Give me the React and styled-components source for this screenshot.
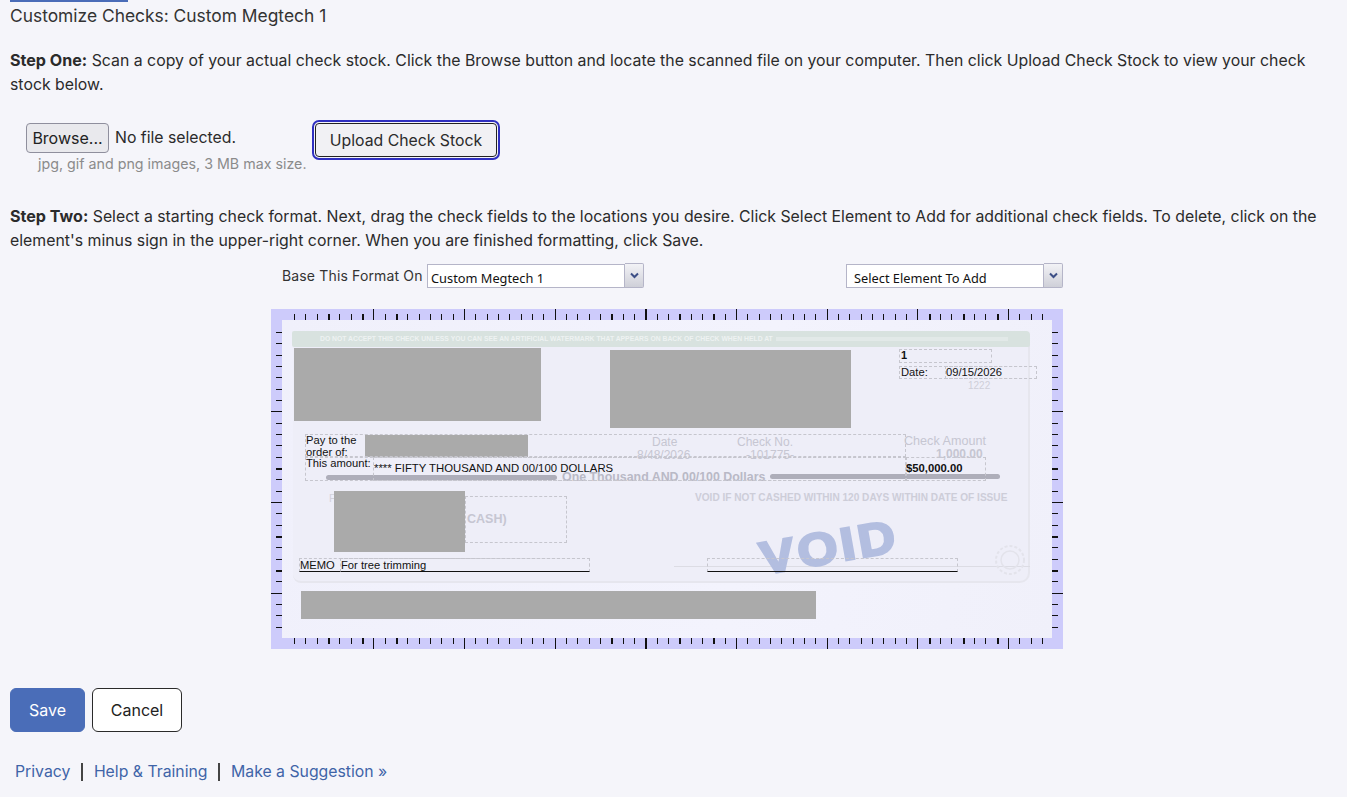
import styled, { createGlobalStyle } from 'styled-components';

const GlobalStyle = createGlobalStyle`
  html, body {
    margin: 0;
    padding: 0;
    background-color: #f5f5fa;
    font-family: Inter, "Liberation Sans", sans-serif;
    color: #2b2b2b;
  }
`

const Page = styled.div`
  padding: 0 10px;
  height: 797px;
  box-sizing: border-box;
  overflow: hidden;
  font-size: 15.85px;
  line-height: 24px;
`

const TabMark = styled.div`
  width: 118px;
  height: 2px;
  background-color: #4a6cb8;
`

const Title = styled.h1`
  margin: 2px 0 0;
  font-size: 17.4px;
  font-weight: 400;
  line-height: 24px;
  color: #333;
`

const Step = styled.p`
  margin: ${props => props.$top}px 0 0;
  & b { font-size: 16.1px; font-weight: 700; line-height: 1; }
`

const UploadRow = styled.div`
  display: flex;
  align-items: flex-start;
  margin: 26px 0 0 16px;
`

const FileColumn = styled.div`
  display: flex;
  flex-direction: column;
  width: 289px;
`

const FilePicker = styled.div`
  display: flex;
  align-items: center;
  gap: 6px;
  font-size: 15.8px;
`

const BrowseButton = styled.button`
  width: 83px;
  height: 30px;
  padding: 0;
  border: 1px solid #8f8f9d;
  border-radius: 4px;
  background-color: #e9e9ed;
  color: #222;
  font: 400 16px Inter, "Liberation Sans", sans-serif;
`

const FileHint = styled.div`
  margin: 0 0 0 12px;
  font-size: 14.25px;
  line-height: 22px;
  color: #8b8b8b;
`

const UploadButton = styled.button`
  width: 182px;
  height: 34px;
  padding: 0;
  border: 1px solid #222;
  border-radius: 4px;
  background-color: #f1f1f4;
  color: #2b2b2b;
  font: 400 15.8px Inter, "Liberation Sans", sans-serif;
  outline: 2.5px solid #3030c0;
  outline-offset: 1.5px;
`

const Toolbar = styled.div`
  display: flex;
  align-items: flex-start;
  margin: 10px 0 0 272px;
  height: 26px;
`

const FormatLabel = styled.span`
  width: 145px;
  font-size: 14px;
  line-height: 26px;
  letter-spacing: 0.15px;
  color: #333;
`

const Dropdown = styled.div`
  display: flex;
  align-items: flex-start;
  margin-left: ${props => props.$left}px;
`

const DropdownField = styled.div`
  width: 198px;
  height: 24px;
  margin-top: 1px;
  padding-left: ${props => props.$pad}px;
  box-sizing: border-box;
  border: 1px solid #b5b5c8;
  background-color: #fff;
  color: #111;
  font: 12.8px/26px "Noto Sans", "Liberation Sans", sans-serif;
`

const DropdownArrow = styled.div`
  width: 19px;
  height: 25px;
  box-sizing: border-box;
  display: flex;
  align-items: center;
  justify-content: center;
  border: 1px solid #b5b5c8;
  border-left: none;
  border-radius: 0 2px 2px 0;
  background: linear-gradient(#f2f2f6, #cfd0d8);
`

const CheckCanvas = styled.div`
  position: relative;
  width: 792px;
  height: 340px;
  margin: 20px 0 0 261px;
  background-color: #cdcbfb;
  font-family: "Liberation Sans", Arial, sans-serif;
  overflow: hidden;
`

const RulerMarks = styled.svg`
  position: absolute;
  left: 0;
  top: 0;
`

const Paper = styled.div`
  position: absolute;
  left: 11px;
  top: 11px;
  width: 770px;
  height: 318px;
  background: linear-gradient(100deg, #f0f0fb, #f3f3fd 60%, #f0f0fa);
`

const CheckStock = styled.div`
  position: absolute;
  left: 22px;
  top: 22px;
  width: 737px;
  height: 252px;
  box-sizing: border-box;
  border: 2px solid #e6e6ee;
  border-top: none;
  border-left: none;
  border-radius: 0 6px 10px 8px;
  background-color: #eeeef8;
`

const Banner = styled.div`
  position: absolute;
  left: 21px;
  top: 22px;
  width: 738px;
  height: 16px;
  border-radius: 2px 4px 2px 2px;
  background-color: #d8e2df;
`

const BannerText = styled.div`
  position: absolute;
  left: 49px;
  top: 26px;
  color: #eef2f2;
  font-size: 6.8px;
  font-weight: 700;
  line-height: 8px;
  white-space: nowrap;
`

const BannerFade = styled.div`
  position: absolute;
  left: 505px;
  top: 28px;
  width: 232px;
  height: 4px;
  background-color: #e2e9e8;
`

const Redacted = styled.div`
  position: absolute;
  left: ${props => props.$x}px;
  top: ${props => props.$y}px;
  width: ${props => props.$w}px;
  height: ${props => props.$h}px;
  background-color: #aaaaaa;
`

const DashedBox = styled.div`
  position: absolute;
  left: ${props => props.$x}px;
  top: ${props => props.$y}px;
  width: ${props => props.$w}px;
  height: ${props => props.$h}px;
  box-sizing: border-box;
  border: 1px dashed #c6c6ce;
  ${props => props.$line && 'border-bottom: 1px solid #111;'}
`

const FieldText = styled.div`
  position: absolute;
  left: ${props => props.$x}px;
  top: ${props => props.$y}px;
  font-size: ${props => props.$size || 11.2}px;
  font-weight: ${props => (props.$bold ? 700 : 400)};
  line-height: 1;
  color: #111;
  white-space: nowrap;
`

const StockText = styled(FieldText)`
  color: ${props => props.$color || '#c6c6d2'};
`

const GreyBar = styled.div`
  position: absolute;
  left: ${props => props.$x}px;
  top: ${props => props.$y}px;
  width: ${props => props.$w}px;
  height: 5px;
  border-radius: 3px;
  background-color: #aeaeba;
`

const SignatureRule = styled.div`
  position: absolute;
  left: 403px;
  top: 257px;
  width: 356px;
  height: 1px;
  background-color: #dcdce4;
`

const VoidStamp = styled.div`
  position: absolute;
  left: 496px;
  top: 215px;
  color: #b3bee0;
  font-size: 46px;
  font-weight: 700;
  line-height: 1;
  letter-spacing: 3px;
  -webkit-text-stroke: 2.5px #b3bee0;
  transform: rotate(-10deg) scaleX(1.12);
`

const Seal = styled.svg`
  position: absolute;
  left: 723px;
  top: 235px;
`

const ButtonRow = styled.div`
  display: flex;
  gap: 7px;
  margin-top: 39px;
`

const ActionButton = styled.button`
  width: ${props => props.$width}px;
  height: 44px;
  padding: 0;
  box-sizing: border-box;
  border: 1px solid ${props => (props.$primary ? '#4a6db8' : '#2a2a2a')};
  border-radius: 6px;
  background-color: ${props => (props.$primary ? '#4a6db8' : '#fff')};
  color: ${props => (props.$primary ? '#fff' : '#222')};
  font: 400 16px Inter, "Liberation Sans", sans-serif;
`

const FooterNav = styled.nav`
  display: flex;
  align-items: center;
  margin: 28px 0 0 5px;
  font-size: 15.8px;
  line-height: 24px;
`

const FooterLink = styled.a`
  color: #3f64a8;
  text-decoration: none;
`

const FooterDivider = styled.span`
  width: 2px;
  height: 18px;
  margin: 0 10.75px;
  background-color: #444;
`

const TICK = 90.67 / 8
const FIRST_TOP = 23
const FIRST_SIDE = 23
const TOP_THICK = [57, 91, 124, 339, 374, 407, 442, 656, 690, 725]
const SIDE_THICK = [159, 227, 261]

function rulerTicks() {
  const ticks = []
  for (let i = 0; i < 67; i++) {
    const x = Math.round(FIRST_TOP + i * TICK)
    const major = (i - 7) % 8 === 0
    const thick = TOP_THICK.some(t => Math.abs(t - x) < 3) ? 2 : 1
    ticks.push(<rect key={`t${i}`} x={x} y={major ? 0 : 5} width={thick} height={major ? 11 : 6} fill="#111" />)
    ticks.push(<rect key={`b${i}`} x={x} y="329" width={thick} height={major ? 11 : 6} fill="#111" />)
  }
  for (let i = 0; i < 27; i++) {
    const y = Math.round(FIRST_SIDE + i * TICK)
    const major = (i - 7) % 8 === 0
    const thick = SIDE_THICK.some(t => Math.abs(t - y) < 3) ? 2 : 1
    ticks.push(<rect key={`l${i}`} x={major ? 0 : 5} y={y} width={major ? 11 : 6} height={thick} fill="#111" />)
    ticks.push(<rect key={`r${i}`} x="781" y={y} width={major ? 11 : 6} height={thick} fill="#111" />)
  }
  return ticks
}

function SelectBox({ children, left, pad }) {
  return (
    <Dropdown $left={left}>
      <DropdownField $pad={pad}>{children}</DropdownField>
      <DropdownArrow>
        <svg width="9" height="7" viewBox="0 0 9 7">
          <path d="M1 1.5 L4.5 5 L8 1.5" fill="none" stroke="#3d4f86" strokeWidth="2" />
        </svg>
      </DropdownArrow>
    </Dropdown>
  )
}

function App() {
  return (
    <Page>
      <GlobalStyle />
      <TabMark />
      <Title>Customize Checks: Custom Megtech 1</Title>

      <Step $top={21}>
        <b>Step One:</b> Scan a copy of your actual check stock. Click the Browse button and locate the scanned file on your computer. Then click Upload Check Stock to view your check stock below.
      </Step>

      <UploadRow>
        <FileColumn>
          <FilePicker>
            <BrowseButton>Browse...</BrowseButton>
            No file selected.
          </FilePicker>
          <FileHint>jpg, gif and png images, 3 MB max size.</FileHint>
        </FileColumn>
        <UploadButton>Upload Check Stock</UploadButton>
      </UploadRow>

      <Step $top={30}>
        <b>Step Two:</b> Select a starting check format. Next, drag the check fields to the locations you desire. Click Select Element to Add for additional check fields. To delete, click on the element's minus sign in the upper-right corner. When you are finished formatting, click Save.
      </Step>

      <Toolbar>
        <FormatLabel>Base This Format On</FormatLabel>
        <SelectBox left={0} pad={3}>Custom Megtech 1</SelectBox>
        <SelectBox left={202} pad={7}>Select Element To Add</SelectBox>
      </Toolbar>

      <CheckCanvas>
        <RulerMarks width="792" height="340">{rulerTicks()}</RulerMarks>
        <Paper />
        <CheckStock />
        <Banner />
        <BannerText>DO NOT ACCEPT THIS CHECK UNLESS YOU CAN SEE AN ARTIFICIAL WATERMARK THAT APPEARS ON BACK OF CHECK WHEN HELD AT</BannerText>
        <BannerFade />

        <StockText $x={381} $y={127} $size={12}>Date</StockText>
        <StockText $x={366} $y={140} $size={12}>8/48/2026</StockText>
        <StockText $x={466} $y={127} $size={12}>Check No.</StockText>
        <StockText $x={475} $y={140} $size={12}>-101775-</StockText>
        <StockText $x={633} $y={126} $size={12.6}>Check Amount</StockText>
        <StockText $x={665} $y={139} $size={12} $bold>1,000.00</StockText>
        <StockText $x={291} $y={162} $size={12.4} $bold $color="#b9b9c6">One Thousand AND 00/100 Dollars</StockText>
        <StockText $x={424} $y={184} $size={10.1} $bold $color="#cdcdd8">VOID IF NOT CASHED WITHIN 120 DAYS WITHIN DATE OF ISSUE</StockText>
        <StockText $x={58} $y={184} $size={11} $color="#d2d2dc">F</StockText>
        <StockText $x={196} $y={204} $size={12.5} $bold>CASH)</StockText>
        <StockText $x={697} $y={72} $size={10} $color="#cfcfd8">1222</StockText>
        <GreyBar $x={55} $y={166} $w={231} />
        <GreyBar $x={499} $y={165} $w={230} />
        <SignatureRule />
        <VoidStamp>VOID</VoidStamp>
        <Seal width="36" height="36" viewBox="0 0 36 36">
          <circle cx="16" cy="16" r="14" fill="none" stroke="#e3e3eb" strokeWidth="2" strokeDasharray="3 2" />
          <circle cx="16" cy="16" r="9" fill="none" stroke="#e3e3eb" strokeWidth="1.5" />
        </Seal>

        <Redacted $x={23} $y={39} $w={247} $h={73} />
        <Redacted $x={339} $y={41} $w={241} $h={78} />
        <Redacted $x={94} $y={126} $w={163} $h={22} />
        <Redacted $x={63} $y={182} $w={131} $h={61} />
        <Redacted $x={30} $y={282} $w={515} $h={28} />

        <DashedBox $x={628} $y={40} $w={93} $h={14} />
        <DashedBox $x={628} $y={57} $w={138} $h={13} />
        <DashedBox $x={674} $y={57} $w={92} $h={13} />
        <DashedBox $x={34} $y={125} $w={601} $h={23} />
        <DashedBox $x={34} $y={148} $w={601} $h={24} />
        <DashedBox $x={102} $y={148} $w={533} $h={24} />
        <DashedBox $x={635} $y={148} $w={80} $h={24} />
        <DashedBox $x={194} $y={187} $w={102} $h={47} />
        <DashedBox $x={28} $y={249} $w={291} $h={14} $line />
        <DashedBox $x={69} $y={249} $w={250} $h={14} $line />
        <DashedBox $x={436} $y={249} $w={251} $h={14} $line />

        <FieldText $x={630} $y={41} $size={11} $bold>1</FieldText>
        <FieldText $x={630} $y={58}>Date:</FieldText>
        <FieldText $x={675} $y={58}>09/15/2026</FieldText>
        <FieldText $x={35} $y={126}>Pay to the</FieldText>
        <FieldText $x={35} $y={138}>order of:</FieldText>
        <FieldText $x={35} $y={149}>This amount:</FieldText>
        <FieldText $x={103} $y={154} $size={11.35}>**** FIFTY THOUSAND AND 00/100 DOLLARS</FieldText>
        <FieldText $x={635} $y={154} $size={11.3} $bold>$50,000.00</FieldText>
        <FieldText $x={29} $y={251}>MEMO</FieldText>
        <FieldText $x={70} $y={251}>For tree trimming</FieldText>
      </CheckCanvas>

      <ButtonRow>
        <ActionButton $primary $width={75}>Save</ActionButton>
        <ActionButton $width={90}>Cancel</ActionButton>
      </ButtonRow>

      <FooterNav>
        <FooterLink href="#">Privacy</FooterLink>
        <FooterDivider />
        <FooterLink href="#">Help &amp; Training</FooterLink>
        <FooterDivider />
        <FooterLink href="#">Make a Suggestion »</FooterLink>
      </FooterNav>
    </Page>
  );
}

export default App;
